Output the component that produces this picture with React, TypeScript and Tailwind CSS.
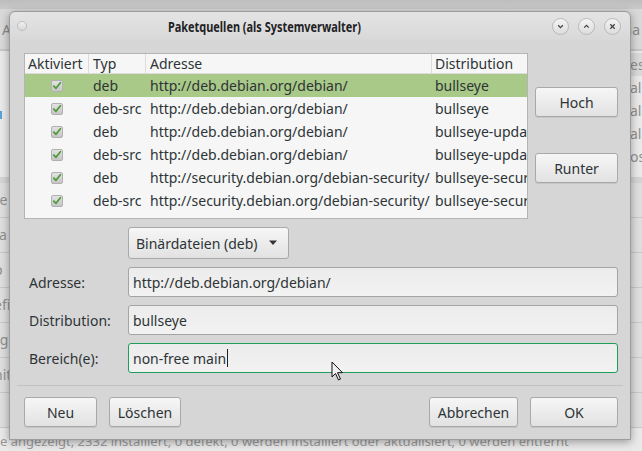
import React from "react";

const font = { fontFamily: '"Noto Sans", "DejaVu Sans", sans-serif' };

const rows = [
  { typ: "deb", addr: "http://deb.debian.org/debian/", dist: "bullseye", sel: true },
  { typ: "deb-src", addr: "http://deb.debian.org/debian/", dist: "bullseye" },
  { typ: "deb", addr: "http://deb.debian.org/debian/", dist: "bullseye-updates" },
  { typ: "deb-src", addr: "http://deb.debian.org/debian/", dist: "bullseye-updates" },
  { typ: "deb", addr: "http://security.debian.org/debian-security/", dist: "bullseye-security" },
  { typ: "deb-src", addr: "http://security.debian.org/debian-security/", dist: "bullseye-security" },
];

function Check() {
  return (
    <svg width="12" height="12" viewBox="0 0 12 12">
      <defs>
        <linearGradient id="cg" x1="0" y1="0" x2="0" y2="1">
          <stop offset="0" stopColor="#e4e4e4" />
          <stop offset="1" stopColor="#c4c4c4" />
        </linearGradient>
      </defs>
      <rect x="0.5" y="0.5" width="11" height="11" rx="1.5" fill="url(#cg)" stroke="#b0b0b0" />
      <path d="M2.8 6.2 L5 8.3 L9.4 2.8" fill="none" stroke="#4f9a3a" strokeWidth="1.8" strokeLinecap="round" strokeLinejoin="round" />
    </svg>
  );
}

function Btn({ children, className = "" }: { children: React.ReactNode; className?: string }) {
  return (
    <div
      className={
        "flex items-center justify-center rounded-[3px] border border-[#a9a9a9] bg-gradient-to-b from-[#f6f6f6] to-[#e2e2e2] text-[14px] text-[#2e3436] shadow-[0_1px_0_rgba(0,0,0,0.08)] " +
        className
      }
    >
      {children}
    </div>
  );
}

function TitleBtn({ children }: { children: React.ReactNode }) {
  return (
    <div className="flex h-[17px] w-[17px] items-center justify-center rounded-full border border-[#b9b9b9] bg-gradient-to-b from-[#f4f4f4] to-[#dcdcdc]">
      {children}
    </div>
  );
}

function Field({ label, value, focus }: { label: string; value: string; focus?: boolean }) {
  return (
    <div className="flex h-[30px] items-center">
      <div className="w-[104px] pl-[5px] text-[14px] text-[#2e3436]">{label}</div>
      <div
        className={
          "flex h-full flex-1 items-center rounded-[3px] border bg-gradient-to-b from-[#ececec] to-[#f2f2f2] pl-[4px] text-[14px] text-[#2e3436] " +
          (focus ? "border-[#1f9d5a]" : "border-[#a4a4a4]")
        }
      >
        <span>{value}</span>
        {focus && <span className="ml-[1px] inline-block h-[18px] w-[1px] bg-[#222]" />}
      </div>
    </div>
  );
}

export default function App() {
  return (
    <div className="relative h-[451px] w-[642px] overflow-hidden bg-[#d2d2d2]" style={font}>
      {/* background window */}
      <div className="absolute inset-0 flex flex-col">
        <div className="h-[12px] bg-gradient-to-b from-[#bdbdbd] to-[#c9c9c9]" />
        <div className="flex h-[50px] items-center justify-between bg-[#d9d9d9] px-[2px] text-[14px] text-[#8a8a8a]">
          <span>A</span>
          <span>na</span>
        </div>
        <div className="h-[2px] bg-[#c6c6c6]" />
        <div className="flex flex-1 flex-col bg-[#e9e9e9] text-[14px] text-[#8f8f8f]">
          <div className="flex h-[126px] justify-between">
            <div className="relative w-[9px]">
              <span className="absolute left-0 top-[60px] h-[8px] w-[2px] bg-[#5aa3d8]" />
            </div>
            <div className="flex w-[12px] flex-col pt-[2px] leading-[23px]">
              <span className="bg-[#d9d9d9]">es</span>
              <span>al</span>
              <span>al</span>
              <span>al</span>
              <span>os</span>
              <span>os</span>
            </div>
          </div>
          <div className="h-[6px] bg-[#d4d4d4]" />
          <div className="flex flex-col leading-[34px]">
            {["re", "ta", "p", "efi", "rg", "nit", ""].map((t, i) => (
              <div key={i} className="h-[35px] border-b border-[#c8c8c8] bg-[#dedede]">
                <span className="-ml-[6px]">{t}</span>
              </div>
            ))}
          </div>
          <div className="mt-[4px] whitespace-nowrap text-[13px] text-[#9a9a9a]">
            e angezeigt, 2332 installiert, 0 defekt, 0 werden installiert oder aktualisiert, 0 werden entfernt
          </div>
        </div>
      </div>

      {/* dialog */}
      <div className="absolute left-[9px] top-[11px] flex h-[429px] w-[622px] flex-col rounded-t-[6px] border border-[#9c9c9c] bg-[#d6d6d6] shadow-[0_2px_8px_rgba(0,0,0,0.35)]">
        {/* title bar */}
        <div className="flex h-[28px] items-center rounded-t-[6px] bg-gradient-to-b from-[#e4e4e4] to-[#d8d8d8] px-[7px]">
          <div className="h-[10px] w-[10px] rounded-full border border-[#bdbdbd] bg-gradient-to-b from-[#f0f0f0] to-[#d8d8d8]" />
          <div className="ml-[141px] flex-1 overflow-visible">
            <span className="inline-block origin-left scale-x-[0.78] whitespace-nowrap text-[14px] font-bold text-[#1f2224]">
              Paketquellen (als Systemverwalter)
            </span>
          </div>
          <div className="flex items-center gap-[9px] pr-[2px]">
            <TitleBtn>
              <svg width="9" height="9" viewBox="0 0 9 9">
                <path d="M2.2 3.3 L4.5 5.6 L6.8 3.3" fill="none" stroke="#444" strokeWidth="1.3" />
              </svg>
            </TitleBtn>
            <TitleBtn>
              <svg width="9" height="9" viewBox="0 0 9 9">
                <path d="M2.2 5.6 L4.5 3.3 L6.8 5.6" fill="none" stroke="#444" strokeWidth="1.3" />
              </svg>
            </TitleBtn>
            <TitleBtn>
              <svg width="9" height="9" viewBox="0 0 9 9">
                <path d="M2.3 2.3 L6.7 6.7 M6.7 2.3 L2.3 6.7" fill="none" stroke="#444" strokeWidth="1.3" />
              </svg>
            </TitleBtn>
          </div>
        </div>

        {/* body */}
        <div className="flex flex-1 flex-col pl-[14px] pr-[12px] pt-[13px]">
          <div className="flex gap-[7px]">
            {/* table */}
            <div className="h-[166px] w-[504px] overflow-hidden border border-[#b4b4b4] bg-[#f6f6f6] text-[14px] text-[#2e3436]">
              <div className="grid h-[20px] grid-cols-[64px_57px_286px_1fr] border-b border-[#dcdcdc] bg-[#f6f6f6] leading-[19px]">
                <div className="border-r border-[#dcdcdc] pl-[3px]">Aktiviert</div>
                <div className="border-r border-[#dcdcdc] pl-[4px]">Typ</div>
                <div className="border-r border-[#dcdcdc] pl-[4px]">Adresse</div>
                <div className="pl-[3px]">Distribution</div>
              </div>
              {rows.map((r, i) => (
                <div
                  key={i}
                  className={
                    "grid h-[23px] grid-cols-[64px_57px_286px_1fr] items-center whitespace-nowrap " +
                    (r.sel ? "bg-[#a8c987]" : "")
                  }
                >
                  <div className="flex justify-center">
                    <Check />
                  </div>
                  <div className="pl-[4px]">{r.typ}</div>
                  <div className="overflow-hidden pl-[4px]">{r.addr}</div>
                  <div className="overflow-hidden pl-[3px]">{r.dist}</div>
                </div>
              ))}
            </div>
            {/* side buttons */}
            <div className="flex flex-1 flex-col pt-[34px]">
              <Btn className="h-[30px]">Hoch</Btn>
              <Btn className="mt-[36px] h-[30px]">Runter</Btn>
            </div>
          </div>

          {/* combo */}
          <div className="mt-[8px] pl-[104px]">
            <div className="flex h-[32px] w-[161px] items-center rounded-[3px] border border-[#a9a9a9] bg-gradient-to-b from-[#f6f6f6] to-[#e2e2e2] pl-[7px] text-[14px] text-[#2e3436]">
              <span className="flex-1">Binärdateien (deb)</span>
              <svg width="10" height="6" viewBox="0 0 10 6" className="mr-[10px]">
                <path d="M1 0.5 L9 0.5 L5 5 Z" fill="#333" />
              </svg>
            </div>
          </div>

          {/* fields */}
          <div className="mt-[8px] flex flex-col gap-[8px]">
            <Field label="Adresse:" value="http://deb.debian.org/debian/" />
            <Field label="Distribution:" value="bullseye" />
            <Field label="Bereich(e):" value="non-free main" focus />
          </div>

          <div className="-ml-[7px] -mr-[5px] mt-[12px] h-[1px] bg-[#c2c2c2]" />

          {/* bottom buttons */}
          <div className="mt-[11px] flex">
            <Btn className="h-[30px] w-[73px]">Neu</Btn>
            <Btn className="ml-[12px] h-[30px] w-[72px]">Löschen</Btn>
            <div className="flex-1" />
            <Btn className="h-[30px] w-[89px]">Abbrechen</Btn>
            <Btn className="ml-[12px] h-[30px] w-[88px]">OK</Btn>
          </div>
        </div>
      </div>

      {/* mouse pointer */}
      <svg className="absolute left-[331px] top-[361px]" width="14" height="21" viewBox="0 0 14 21">
        <path d="M1 1 L1 16 L4.5 12.5 L7.5 19 L9.5 18 L6.5 11.7 L11.5 11.7 Z" fill="#f2f2f2" stroke="#111" strokeWidth="1" strokeLinejoin="round" />
      </svg>
    </div>
  );
}
